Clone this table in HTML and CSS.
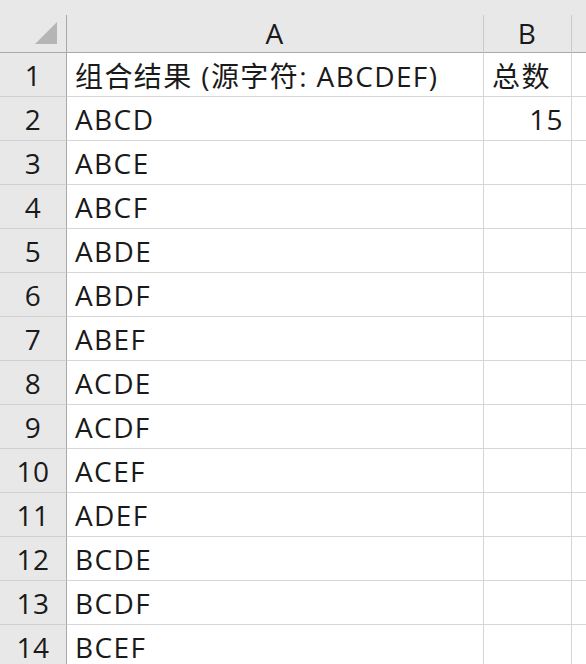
FILE: index.html
```html
<!DOCTYPE html>
<html>
<head>
<meta charset="utf-8">
<link rel="stylesheet" href="styles.css">
</head>
<body>
<div class="sheet">
  <div class="strip"></div>
  <div class="hdr corner"><svg class="tri" width="24" height="24" viewBox="0 0 24 24"><polygon points="0,22 22,22 22,0" fill="#b5b5b5"/></svg></div>
  <div class="hdr col">A</div>
  <div class="hdr col">B</div>
  <div class="hdr col last"></div>

  <div class="rn">1</div><div class="c">组合结果 (源字符: ABCDEF)</div><div class="c">总数</div><div class="c last"></div>
  <div class="rn">2</div><div class="c">ABCD</div><div class="c num">15</div><div class="c last"></div>
  <div class="rn">3</div><div class="c">ABCE</div><div class="c"></div><div class="c last"></div>
  <div class="rn">4</div><div class="c">ABCF</div><div class="c"></div><div class="c last"></div>
  <div class="rn">5</div><div class="c">ABDE</div><div class="c"></div><div class="c last"></div>
  <div class="rn">6</div><div class="c">ABDF</div><div class="c"></div><div class="c last"></div>
  <div class="rn">7</div><div class="c">ABEF</div><div class="c"></div><div class="c last"></div>
  <div class="rn">8</div><div class="c">ACDE</div><div class="c"></div><div class="c last"></div>
  <div class="rn">9</div><div class="c">ACDF</div><div class="c"></div><div class="c last"></div>
  <div class="rn">10</div><div class="c">ACEF</div><div class="c"></div><div class="c last"></div>
  <div class="rn">11</div><div class="c">ADEF</div><div class="c"></div><div class="c last"></div>
  <div class="rn">12</div><div class="c">BCDE</div><div class="c"></div><div class="c last"></div>
  <div class="rn">13</div><div class="c">BCDF</div><div class="c"></div><div class="c last"></div>
  <div class="rn">14</div><div class="c">BCEF</div><div class="c"></div><div class="c last"></div>
</div>
</body>
</html>
```
FILE: styles.css
```css
html, body {
  margin: 0;
  padding: 0;
  background: #ffffff;
  overflow: hidden;
}
.sheet {
  display: grid;
  grid-template-columns: 67px 417px 88px 1fr;
  grid-template-rows: 15px 38px repeat(14, 44px);
  width: 586px;
  font-family: "Open Sans", "Noto Sans CJK SC", sans-serif;
  font-size: 28px;
  letter-spacing: 1.4px;
  color: #1a1a1a;
}
.strip {
  grid-column: 1 / -1;
  background: #e8e8e8;
}
.hdr {
  background: #e8e8e8;
  border-bottom: 1px solid #a9a9a9;
  display: flex;
  align-items: center;
  justify-content: center;
  box-sizing: border-box;
  padding-bottom: 2px;
}
.hdr.col {
  border-right: 1px solid #c9c9c9;
}
.hdr.corner {
  border-right: 1px solid #a9a9a9;
  justify-content: flex-end;
  align-items: flex-end;
  padding: 0 7px 6px 0;
}
.hdr.last {
  border-right: none;
}
.rn {
  background: #e8e8e8;
  border-right: 1px solid #a9a9a9;
  border-bottom: 1px solid #cfcfcf;
  display: flex;
  align-items: center;
  justify-content: center;
  box-sizing: border-box;
  letter-spacing: 0.5px;
}
.c {
  border-right: 1px solid #d6d6d6;
  border-bottom: 1px solid #d6d6d6;
  display: flex;
  align-items: center;
  padding-left: 8px;
  box-sizing: border-box;
  white-space: nowrap;
  overflow: hidden;
}
.c.num {
  justify-content: flex-end;
  padding-right: 7px;
}
.c.last {
  border-right: none;
}
.tri {
  display: block;
}
```
